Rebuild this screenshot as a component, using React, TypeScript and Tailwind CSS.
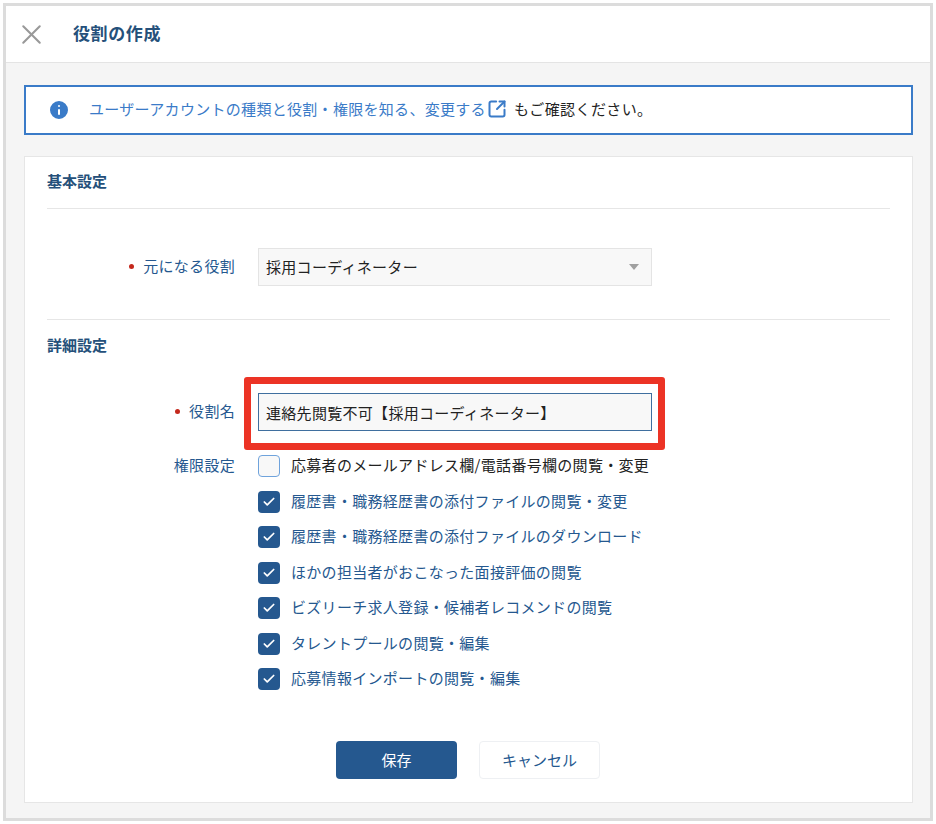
import { X, Check, SquareArrowOutUpRight, Info } from "lucide-react";

const permissions = [
  { label: "応募者のメールアドレス欄/電話番号欄の閲覧・変更", checked: false },
  { label: "履歴書・職務経歴書の添付ファイルの閲覧・変更", checked: true },
  { label: "履歴書・職務経歴書の添付ファイルのダウンロード", checked: true },
  { label: "ほかの担当者がおこなった面接評価の閲覧", checked: true },
  { label: "ビズリーチ求人登録・候補者レコメンドの閲覧", checked: true },
  { label: "タレントプールの閲覧・編集", checked: true },
  { label: "応募情報インポートの閲覧・編集", checked: true },
];

function FieldLabel({ children, required }: { children: string; required?: boolean }) {
  return (
    <div className="flex w-[188px] shrink-0 items-center justify-end gap-[9px] pb-[1px] text-[15px] tracking-[0.3px] text-[#25588f]">
      {required && <span className="size-[5px] rounded-full bg-[#c4281c]" />}
      <span>{children}</span>
    </div>
  );
}

function PermissionRow({ label, checked }: { label: string; checked: boolean }) {
  return (
    <div className="flex h-[22px] items-center gap-[11px]">
      {checked ? (
        <span className="flex size-[22px] shrink-0 items-center justify-center rounded-[4px] bg-[#25588f]">
          <Check className="size-[14px] text-white" strokeWidth={3} />
        </span>
      ) : (
        <span className="size-[22px] shrink-0 rounded-[4px] border border-[#6fa3dc] bg-[#f8f8f8]" />
      )}
      <span className={`pb-[1px] text-[15px] tracking-[0.3px] whitespace-nowrap ${checked ? "text-[#25588f]" : "text-[#222222]"}`}>
        {label}
      </span>
    </div>
  );
}

export default function App() {
  return (
    <div className="h-[824px] w-[936px] bg-white pt-[3px] pr-[3px] pl-[3px] font-['Noto_Sans_CJK_JP','Noto_Sans',sans-serif]">
      <div className="h-[818px] border-[3px] border-[#dcdcdc] bg-[#f5f5f5]">
        <header className="flex h-[57px] items-center border-b border-[#e4e4e4] bg-white pl-[9px]">
          <X className="size-[33px] text-[#999999]" strokeWidth={1.5} />
          <h1 className="ml-[25px] pb-[3px] text-[17px] font-bold tracking-[0.6px] text-[#25507a]">役割の作成</h1>
        </header>

        <div className="px-[18px] pt-[22px]">
          <div className="flex h-[50px] w-[889px] items-center border-2 border-[#3a7bc8] bg-white pl-[21px]">
            <Info className="size-[24px] fill-[#3a7bc8] text-white" strokeWidth={2} />
            <span className="ml-[18px] pb-[2px] text-[15px] tracking-[0.3px] whitespace-nowrap text-[#3a7bc8]">
              ユーザーアカウントの種類と役割・権限を知る、変更する
            </span>
            <SquareArrowOutUpRight className="mb-[2px] ml-[1px] size-[20px] text-[#3a7bc8]" strokeWidth={2.4} />
            <span className="ml-[7px] pb-[2px] text-[15px] tracking-[0.4px] whitespace-nowrap text-[#222222]">もご確認ください。</span>
          </div>

          <section className="mt-[21px] h-[647px] w-[889px] border border-[#e6e6e6] bg-white px-[22px]">
            <h2 className="flex h-[51px] items-center pb-[2px] text-[15px] font-bold text-[#25507a]">基本設定</h2>
            <div className="border-t border-[#e6e6e6]" />

            <div className="mt-[39px] flex h-[38px] items-stretch gap-[23px]">
              <FieldLabel required>元になる役割</FieldLabel>
              <div className="flex w-[394px] items-center justify-between border border-[#e4e4e4] bg-[#f8f8f8] pr-[12px] pl-[7px] text-[15px] tracking-[0.3px] text-[#222222]">
                <span>採用コーディネーター</span>
                <span className="h-0 w-0 border-x-[5px] border-t-[6px] border-x-transparent border-t-[#a0a0a0]" />
              </div>
            </div>

            <div className="mt-[33px] border-t border-[#e6e6e6]" />
            <h2 className="flex h-[52px] items-center pb-[2px] text-[15px] font-bold text-[#25507a]">詳細設定</h2>

            <div className="mt-[21px] flex h-[38px] items-stretch gap-[23px]">
              <FieldLabel required>役割名</FieldLabel>
              <div className="relative w-[394px]">
                <input
                  readOnly
                  value="連絡先閲覧不可【採用コーディネーター】"
                  className="h-full w-full border border-[#3f6f9f] bg-[#f8f8f8] pl-[7px] text-[15px] tracking-[0.3px] text-[#222222] outline-none"
                />
                <div className="absolute top-[-16px] left-[-14px] h-[73px] w-[421px] rounded-[3px] border-[7px] border-[#ec3325]" />
              </div>
            </div>

            <div className="mt-[24px] flex items-start gap-[23px]">
              <div className="flex h-[22px]">
                <FieldLabel>権限設定</FieldLabel>
              </div>
              <div className="flex flex-col gap-[13.5px]">
                {permissions.map((p) => (
                  <PermissionRow key={p.label} label={p.label} checked={p.checked} />
                ))}
              </div>
            </div>

            <div className="mt-[51px] flex gap-[22px] pl-[289px]">
              <button className="h-[38px] w-[121px] rounded-[4px] bg-[#25588f] text-[15px] text-white">保存</button>
              <button className="h-[38px] w-[121px] rounded-[4px] border border-[#eef0f3] bg-white text-[15px] text-[#25588f]">
                キャンセル
              </button>
            </div>
          </section>
        </div>
      </div>
    </div>
  );
}
